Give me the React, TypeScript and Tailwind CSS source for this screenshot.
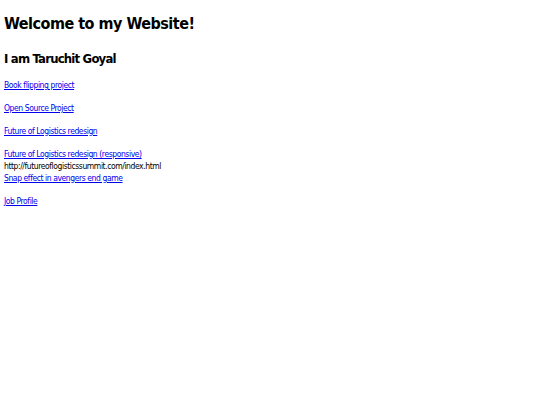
import React from 'react';

const linkClass = "text-[#0000ee] underline";

export default function App() {
  return (
    <div className="min-h-screen bg-white px-[4px] text-black [font-family:'DejaVu_Sans_Condensed','DejaVu_Sans',sans-serif] [font-stretch:condensed]">
      <h1 className="pt-[13px] text-[16px] font-bold leading-[22px] tracking-[-0.5px]">Welcome to my Website!</h1>
      <h2 className="mt-[15px] text-[13px] font-bold leading-[18px] tracking-[-0.8px]">I am Taruchit Goyal</h2>
      <div className="mt-[11px] text-[8.5px] leading-[12px] tracking-[-0.42px]">
        <p>
          <a href="#" className={linkClass}>Book flipping project</a>
        </p>
        <p className="mt-[11px]">
          <a href="#" className={linkClass}>Open Source Project</a>
        </p>
        <p className="mt-[11px]">
          <a href="#" className={linkClass}>Future of Logistics redesign</a>
        </p>
        <p className="mt-[11px]">
          <a href="#" className={linkClass}>Future of Logistics redesign (responsive)</a>
          <br />
          http://futureoflogisticssummit.com/index.html
          <br />
          <a href="#" className={linkClass}>Snap effect in avengers end game</a>
        </p>
        <p className="mt-[11px]">
          <a href="#" className={linkClass}>Job Profile</a>
        </p>
      </div>
    </div>
  );
}
